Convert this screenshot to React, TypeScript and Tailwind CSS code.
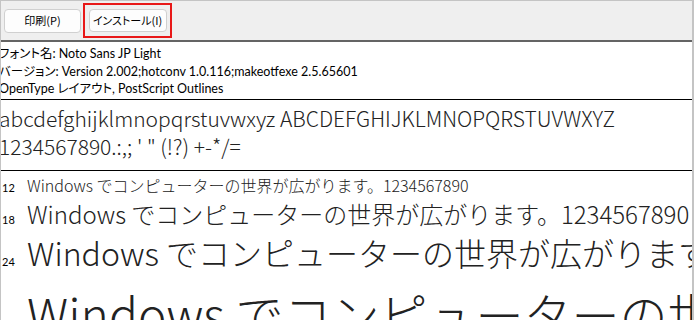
import React from "react";

const ui = { fontFamily: '"Lato", "Noto Sans CJK JP", sans-serif' };
const sample = { fontFamily: '"Noto Sans CJK JP Light", "Noto Sans CJK JP", "Noto Sans", sans-serif' };

const rows = [
  { label: "12", size: "text-[16px] leading-[22px]" },
  { label: "18", size: "text-[24px] leading-[35px]" },
  { label: "24", size: "text-[32px] leading-[42px]" },
  { label: "36", size: "text-[48px] leading-[81px]" },
];

export default function App() {
  return (
    <div className="w-[694px] h-[320px] overflow-hidden bg-white border-t border-l border-r-2 border-[#c4c4c4] flex flex-col" style={ui}>
      <div className="h-[41px] shrink-0 bg-[#efefef] border-b-2 border-[#646464] flex items-center gap-[2px] pl-[3px]">
        <button className="w-[77px] h-[24px] rounded-[4px] border border-[#d0d0d0] bg-[#fdfdfd] text-[11px] leading-none text-black whitespace-nowrap [font-feature-settings:'palt']" style={{ fontFamily: '"Noto Sans CJK JP", sans-serif' }}>
          印刷(P)
        </button>
        <div className="w-[89px] h-[35px] border-2 border-[#e81818] flex items-center justify-center">
          <button className="w-[78px] h-[23px] rounded-[4px] border border-[#d0d0d0] bg-[#fdfdfd] text-[11px] leading-none text-black whitespace-nowrap [font-feature-settings:'palt']" style={{ fontFamily: '"Noto Sans CJK JP", sans-serif' }}>
            インストール(I)
          </button>
        </div>
      </div>
      <div className="shrink-0 pt-[3px] pb-[1px] -ml-[2px] text-[12.5px] leading-[17.5px] text-black whitespace-nowrap [font-feature-settings:'palt']">
        <div>フォント名: Noto Sans JP Light</div>
        <div>バージョン: Version 2.002;hotconv 1.0.116;makeotfexe 2.5.65601</div>
        <div>OpenType レイアウト, PostScript Outlines</div>
      </div>
      <div className="shrink-0 border-t border-black pt-[4px] pb-[10px] -ml-[2px] text-[21px] leading-[28px] font-light text-[#222] whitespace-nowrap" style={sample}>
        <div>abcdefghijklmnopqrstuvwxyz ABCDEFGHIJKLMNOPQRSTUVWXYZ</div>
        <div>1234567890.:,; ' " (!?) +-*/=</div>
      </div>
      <div className="shrink-0 border-t border-black pt-[3px]">
        {rows.map((r) => (
          <div key={r.label} className="flex items-baseline whitespace-nowrap">
            <span className="w-[26px] shrink-0 text-[11px] leading-none text-black pl-[1px]">{r.label}</span>
            <span className={`${r.size} font-light text-[#222]`} style={sample}>
              Windows でコンピューターの世界が広がります。1234567890
            </span>
          </div>
        ))}
      </div>
    </div>
  );
}
